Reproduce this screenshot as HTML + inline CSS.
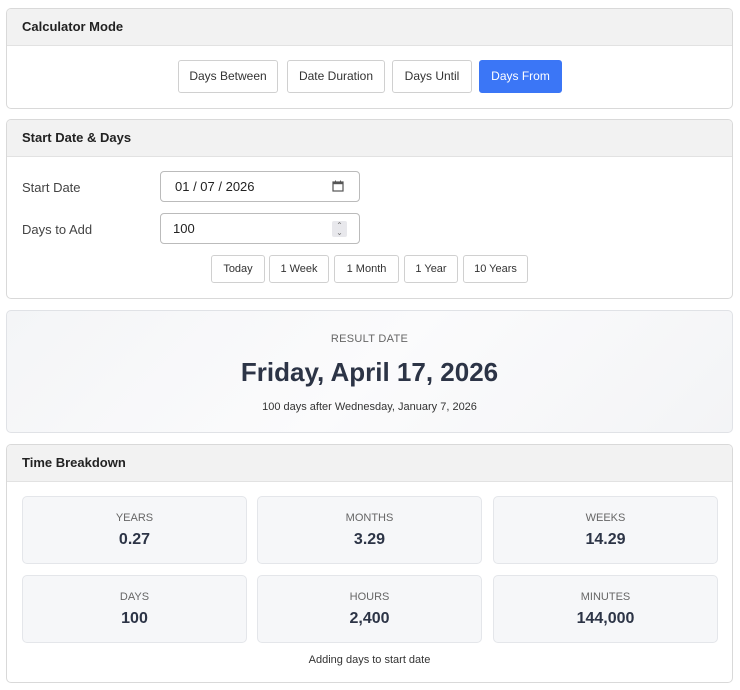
<!DOCTYPE html>
<html><head><style>
*{box-sizing:border-box;margin:0;padding:0}
body{width:740px;height:690px;background:#fff;font-family:"Liberation Sans",Arial,sans-serif;color:#333;position:relative;overflow:hidden}
.p{position:absolute;left:6px;width:727px;border:1px solid #d9d9d9;border-radius:5px;background:#fff;overflow:hidden}
.h{height:37px;background:#f2f2f2;border-bottom:1px solid #e2e2e2;font-size:13px;font-weight:bold;color:#222;padding:10px 0 0 15px}
.b{position:absolute;border:1px solid #d0d0d0;border-radius:3px;background:#fff;font-size:12px;color:#333;text-align:center;line-height:31px;height:33px}
.q{position:absolute;top:255px;height:28px;line-height:27px;border:1px solid #d0d0d0;border-radius:3px;background:#fff;font-size:11px;color:#333;text-align:center}
.lab{position:absolute;left:22px;font-size:13px;color:#444}
.in{position:absolute;left:160px;width:200px;height:31px;border:1px solid #bbb;border-radius:4px;font-size:13px;color:#222;line-height:30px}
.c{position:absolute;width:225px;height:68px;background:#f6f7f9;border:1px solid #e4e6ea;border-radius:5px;text-align:center}
.c .l{font-size:11px;color:#666;margin-top:15px}
.c .v{font-size:16px;font-weight:bold;color:#2c3446;margin-top:7px}
</style></head><body>
<div class="p" style="top:8px;height:101px"><div class="h">Calculator Mode</div></div>
<div class="b" style="left:178px;top:60px;width:100px">Days Between</div>
<div class="b" style="left:287px;top:60px;width:98px">Date Duration</div>
<div class="b" style="left:392px;top:60px;width:80px">Days Until</div>
<div class="b" style="left:479px;top:60px;width:83px;background:#3b76f6;border-color:#3b76f6;color:#fff">Days From</div>

<div class="p" style="top:119px;height:180px"><div class="h">Start Date &amp; Days</div></div>
<div class="lab" style="top:180px">Start Date</div>
<div class="in" style="top:171px;padding-left:14px">01 / 07 / 2026
<svg style="position:absolute;right:15px;top:8px" width="12" height="12" viewBox="0 0 12 12"><rect x="1" y="2" width="10" height="9" fill="none" stroke="#555" stroke-width="1.2"/><rect x="1" y="2" width="10" height="2.2" fill="#555"/><line x1="3.5" y1="0.5" x2="3.5" y2="2" stroke="#555"/><line x1="8.5" y1="0.5" x2="8.5" y2="2" stroke="#555"/></svg></div>
<div class="lab" style="top:222px">Days to Add</div>
<div class="in" style="top:213px;padding-left:12px">100
<div style="position:absolute;right:12px;top:7px;width:15px;height:16px;background:#e8e8ec;border-radius:2px;font-size:8px;line-height:7px;text-align:center;color:#777;padding-top:1px">&#8963;<br>&#8964;</div></div>
<div class="q" style="left:211px;width:54px">Today</div>
<div class="q" style="left:269px;width:60px">1 Week</div>
<div class="q" style="left:334px;width:65px">1 Month</div>
<div class="q" style="left:404px;width:54px">1 Year</div>
<div class="q" style="left:463px;width:65px">10 Years</div>

<div class="p" style="top:310px;height:123px;background:linear-gradient(135deg,#f4f5f7,#fbfbfc 50%,#f3f4f6);border-color:#e0e2e6;text-align:center">
<div style="font-size:11px;color:#666;margin-top:22px;letter-spacing:.3px">RESULT DATE</div>
<div style="font-size:26px;font-weight:bold;color:#2c3446;margin-top:12px">Friday, April 17, 2026</div>
<div style="font-size:11px;color:#333;margin-top:13px">100 days after Wednesday, January 7, 2026</div>
</div>

<div class="p" style="top:444px;height:239px"><div class="h">Time Breakdown</div>
<div style="position:absolute;top:209px;width:100%;text-align:center;font-size:11px;color:#333">Adding days to start date</div></div>
<div class="c" style="left:22px;top:496px"><div class="l">YEARS</div><div class="v">0.27</div></div>
<div class="c" style="left:257px;top:496px"><div class="l">MONTHS</div><div class="v">3.29</div></div>
<div class="c" style="left:493px;top:496px"><div class="l">WEEKS</div><div class="v">14.29</div></div>
<div class="c" style="left:22px;top:575px"><div class="l">DAYS</div><div class="v">100</div></div>
<div class="c" style="left:257px;top:575px"><div class="l">HOURS</div><div class="v">2,400</div></div>
<div class="c" style="left:493px;top:575px"><div class="l">MINUTES</div><div class="v">144,000</div></div>
</body></html>
